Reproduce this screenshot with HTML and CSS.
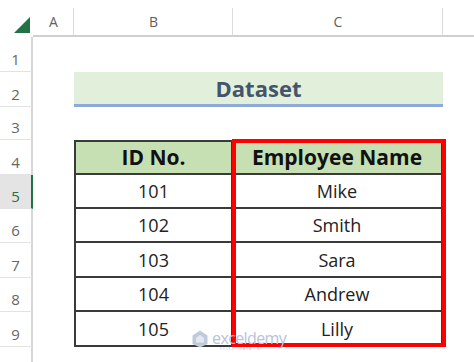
FILE: index.html
```html
<!DOCTYPE html>
<html>
<head>
<meta charset="utf-8">
<link rel="stylesheet" href="styles.css">
</head>
<body>
<div class="sheet">
  <div class="colhead">
    <div class="corner"><span class="tri"></span></div>
    <div class="ch ch-a">A</div>
    <div class="ch ch-b">B</div>
    <div class="ch ch-c">C</div>
    <div class="ch ch-d"></div>
  </div>
  <div class="body">
    <div class="rowhead">
      <div class="rh r35">1</div>
      <div class="rh r35">2</div>
      <div class="rh r33">3</div>
      <div class="rh r35">4</div>
      <div class="rh r34 sel">5</div>
      <div class="rh r34">6</div>
      <div class="rh r35">7</div>
      <div class="rh r34">8</div>
      <div class="rh r35">9</div>
      <div class="rh rest"></div>
    </div>
    <div class="cells">
      <div class="row r35"></div>
      <div class="row r35"><div class="band">Dataset</div></div>
      <div class="row r33"></div>
      <div class="tablewrap">
        <div class="tbl">
          <div class="td th">ID No.</div><div class="td th">Employee Name</div>
          <div class="td h34">101</div><div class="td h34">Mike</div>
          <div class="td h34">102</div><div class="td h34">Smith</div>
          <div class="td h35">103</div><div class="td h35">Sara</div>
          <div class="td h34">104</div><div class="td h34">Andrew</div>
          <div class="td h35">105</div><div class="td h35">Lilly</div>
        </div>
        <div class="highlight"></div>
      </div>
    </div>
  </div>
  <div class="watermark">
    <svg class="wm-icon" width="16" height="18" viewBox="0 0 16 18">
      <path d="M8 0.5 L15.5 5.5 L15.5 14 L8 17.5 L0.5 14 L0.5 5.5 Z" fill="#bfcadb"/>
      <path d="M8 5 L12 8 L12 12.5 L4 12.5 L4 8 Z" fill="#e4e9f1"/>
    </svg>
    <div class="wm-text">
      <span class="wm-name">exceldemy</span>
      <span class="wm-sub">EXCEL · DATA · BI</span>
    </div>
  </div>
</div>
</body>
</html>
```
FILE: styles.css
```css
* { box-sizing: border-box; }
html, body { margin: 0; padding: 0; background: #fff; }
body { width: 474px; height: 362px; overflow: hidden; font-family: "Open Sans", "Noto Sans", sans-serif; }
.sheet { position: relative; width: 474px; height: 362px; }

.colhead { display: flex; height: 37px; }
.corner { width: 33px; height: 37px; display: flex; align-items: flex-end; justify-content: flex-end; padding: 0 3px 4px 0; }
.tri { width: 16px; height: 16px; background: #217346; clip-path: polygon(100% 0, 100% 100%, 0 100%); }
.ch { height: 37px; border-bottom: 2px solid #cfcfcf; color: #5f5f5f; font-size: 14px; display: flex; justify-content: center; align-items: flex-start; padding-top: 15px; line-height: 14px;
  background: linear-gradient(#dcdcdc, #dcdcdc) right 8px / 1px 27px no-repeat; }
.ch-a { width: 41px; }
.ch-b { width: 159px; }
.ch-c { width: 210px; }
.ch-d { flex: 1; background: none; }

.body { display: flex; }
.rowhead { width: 33px; display: flex; flex-direction: column; }
.rh { width: 33px; border-right: 2px solid #d6d6d6; border-bottom: 1px solid #e2e2e2; color: #666; font-size: 15px; display: flex; justify-content: center; align-items: flex-end; padding-bottom: 4px; line-height: 16px; }
.rh.sel { background: #e4e4e4; border-right-color: #217346; color: #2f6b49; }
.rh.rest { height: 15px; border-bottom: none; }
.r35 { height: 35px; }
.r34 { height: 34px; }
.r33 { height: 33px; }

.cells { flex: 1; display: flex; flex-direction: column; }
.row { width: 100%; }
.band { margin-left: 41px; width: 369px; height: 35px; background: #e2efda; border-bottom: 3px solid #8eaadb; color: #44546a; font-weight: 700; font-size: 22px; display: flex; align-items: center; justify-content: center; line-height: 1; padding-bottom: 1px; }

.tablewrap { position: relative; margin-left: 41px; width: 369px; }
.tbl { display: grid; grid-template-columns: 157px 210px; border-top: 2px solid #3a3a3a; border-left: 2px solid #3a3a3a; }
.td { border-right: 2px solid #3a3a3a; border-bottom: 2px solid #3a3a3a; display: flex; align-items: center; justify-content: center; font-size: 18px; color: #222; line-height: 1; }
.th { height: 33px; background: #c6e0b4; font-weight: 700; font-size: 21px; color: #111; }
.h34 { height: 34px; }
.h35 { height: 35px; }
.highlight { position: absolute; left: 158px; top: -1px; width: 214px; height: 208px; border: 4px solid #ff0000; }

.watermark { position: absolute; left: 192px; top: 330px; display: flex; align-items: flex-start; gap: 4px; }
.wm-text { display: flex; flex-direction: column; gap: 1px; }
.wm-name { font-size: 16px; color: #b6c2dc; line-height: 16px; letter-spacing: -0.6px; }
.wm-sub { font-size: 4px; color: #c3ccdd; line-height: 4px; letter-spacing: 0.6px; padding-left: 8px; }
```
